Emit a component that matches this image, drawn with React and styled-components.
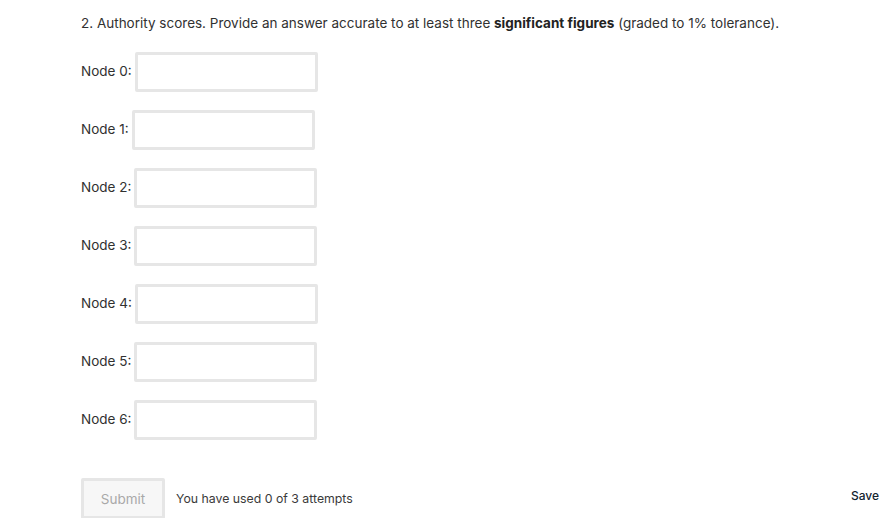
import React from "react";
import styled, { createGlobalStyle } from "styled-components";

const Global = createGlobalStyle`
  html, body { margin: 0; padding: 0; background: #fff; }
  body { font-family: Inter, "Liberation Sans", sans-serif; color: #313131; }
`;

const Page = styled.div`
  width: 890px;
  height: 518px;
  overflow: hidden;
  box-sizing: border-box;
  padding: 13px 11px 0 81px;
  font-size: 13.5px;
`;

const Prompt = styled.p`
  margin: 0;
  line-height: 20px;
  color: #313131;
  b { font-weight: 700; color: #222; }
`;

const Fields = styled.div`
  display: flex;
  flex-direction: column;
  gap: 18px;
  margin-top: 19px;
`;

const Row = styled.label`
  display: flex;
  align-items: center;
  gap: 3px;
  height: 40px;
`;

const Label = styled.span`
  color: #313131;
  line-height: 16px;
  margin-top: -2px;
`;

const Input = styled.input`
  box-sizing: border-box;
  width: 183px;
  height: 40px;
  border: 3px solid #e6e6e6;
  border-radius: 2px;
  background: #fff;
  outline: none;
  padding: 0 8px;
  font: inherit;
`;

const Footer = styled.div`
  display: flex;
  align-items: center;
  margin-top: 38px;
`;

const SubmitButton = styled.button`
  box-sizing: border-box;
  width: 84px;
  height: 41px;
  border: 3px solid #e6e6e6;
  border-radius: 2px;
  background: #f7f7f7;
  color: #a9a9a9;
  font: inherit;
  font-size: 13.5px;
  cursor: default;
`;

const Attempts = styled.span`
  margin-left: 11px;
  color: #3a3a3a;
  font-size: 12.3px;
`;

const Save = styled.button`
  margin-left: auto;
  margin-top: -6px;
  border: none;
  background: none;
  padding: 0;
  color: #14232f;
  font: inherit;
  font-size: 12px;
  font-weight: 500;
`;

const nodes = [0, 1, 2, 3, 4, 5, 6];

export default function App() {
  return (
    <>
      <Global />
      <Page>
        <Prompt>
          2. Authority scores. Provide an answer accurate to at least three{" "}
          <b>significant figures</b> (graded to 1% tolerance).
        </Prompt>
        <Fields>
          {nodes.map((n) => (
            <Row key={n}>
              <Label>Node {n}:</Label>
              <Input type="text" />
            </Row>
          ))}
        </Fields>
        <Footer>
          <SubmitButton disabled>Submit</SubmitButton>
          <Attempts>You have used 0 of 3 attempts</Attempts>
          <Save>Save</Save>
        </Footer>
      </Page>
    </>
  );
}
